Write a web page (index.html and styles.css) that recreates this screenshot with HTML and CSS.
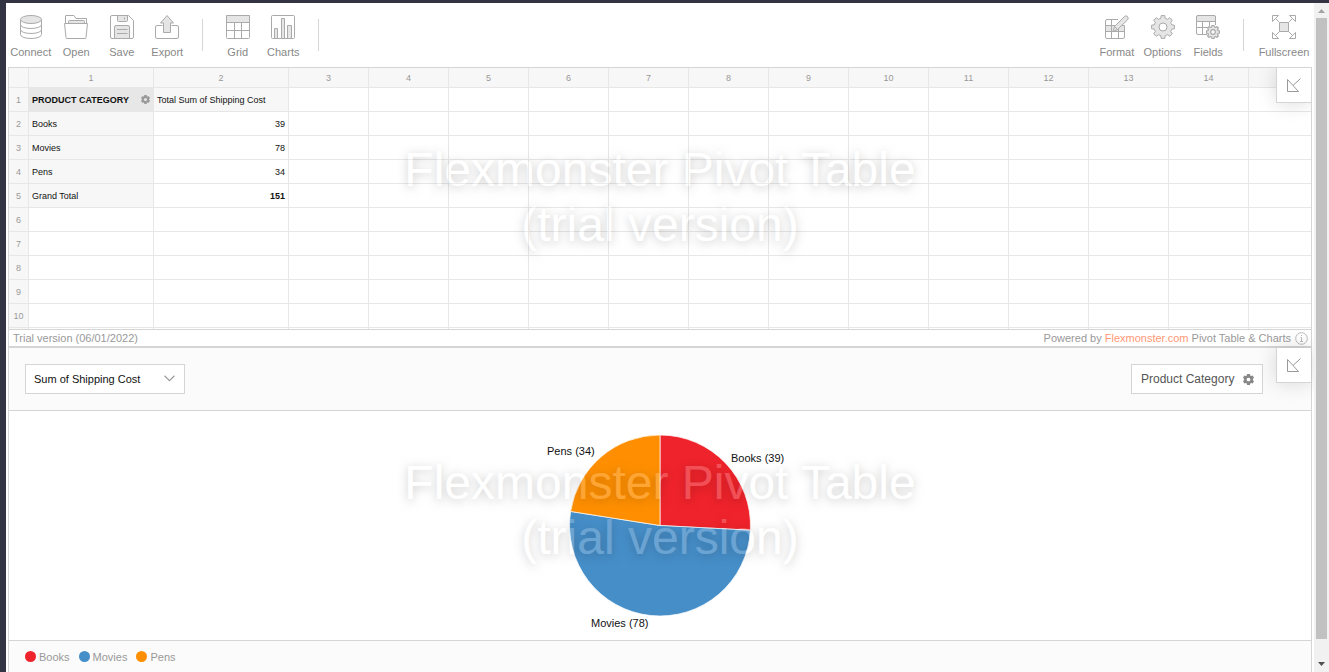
FILE: index.html
```html
<!DOCTYPE html>
<html lang="en">
<head>
<meta charset="utf-8">
<title>Pivot Table &amp; Charts</title>
<link rel="stylesheet" href="styles.css">
</head>
<body>
<svg class="defs" width="0" height="0" aria-hidden="true">
  <symbol id="gear" viewBox="-12 -12 24 24">
    <path stroke-linejoin="round" d="M-2.200-8.700L-1.800-11.400H1.800L2.200-8.700 4.600-7.700 6.800-9.300 9.300-6.800 7.700-4.600 8.700-2.200 11.400-1.800V1.800L8.700 2.200 7.700 4.600 9.300 6.800 6.800 9.300 4.600 7.700 2.200 8.700 1.800 11.400H-1.800L-2.200 8.700-4.600 7.700-6.800 9.300-9.300 6.800-7.700 4.600-8.700 2.200-11.400 1.800V-1.800L-8.700-2.200-7.700-4.600-9.300-6.800-6.800-9.300-4.600-7.700z"/>
    <circle class="hole" cx="0" cy="0" r="4"/>
  </symbol>
  <symbol id="cog" viewBox="0 0 10 10">
    <path fill-rule="evenodd" d="M3.700 0h2.600l.3 1.400.8.4L8.800 1.300l1.200 2.200L9 4.500v1l1 1-1.200 2.200-1.400-.5-.8.4-.3 1.400H3.700l-.3-1.400-.8-.4-1.400.5L0 6.500l1-1v-1l-1-1 1.200-2.200 1.400.5.8-.4zM5 3.300a1.700 1.700 0 1 0 0 3.400 1.700 1.700 0 0 0 0-3.400z"/>
  </symbol>
  <symbol id="collapse" viewBox="0 0 14 14">
    <path d="M.5 1.500v12h11zM6 7.500L13.500 .5"/>
  </symbol>
</svg>
<div class="page">
  <main class="content">
    <nav class="toolbar" aria-label="Toolbar">
      <div class="group group-four">
        <button class="tool" type="button"><svg class="icon" viewBox="0 0 24 24"><path d="M1.500 4.500v15c0 5.300 21 5.300 21 0v-15"/><path d="M1.500 9.500c0 5.300 21 5.300 21 0M1.500 14.500c0 5.300 21 5.300 21 0"/><ellipse class="shade" cx="12" cy="4.500" rx="10.500" ry="4"/></svg><span>Connect</span></button>
        <button class="tool" type="button"><svg class="icon" viewBox="0 0 24 24"><path d="M1.500 8V1q0-.5.500-.500h8l2 3h10.500V8"/><path class="shade" d="M4.500 8.500V6.500q0-1 1-1h14q1 0 1 1v2z"/><path class="solid" d="M.5 8.500h23l-1.500 14q0 1-1 1H3q-1 0-1-1z"/></svg><span>Open</span></button>
        <button class="tool" type="button"><svg class="icon" viewBox="0 0 24 24"><path d="M2 .5h16.500l5 5V22q0 1.500-1.500 1.500H2Q.5 23.500.5 22V2Q.5.5 2 .5z"/><path class="shade" d="M7.500 .5v5q0 1 1 1h8q1 0 1-1v-5zM4.500 23.500V12q0-1.500 1.500-1.500h12q1.500 0 1.500 1.500v11.500z"/><path d="M14.500 2.500v2M7 14.500h10.500M7 18.500h10.500"/></svg><span>Save</span></button>
        <button class="tool" type="button"><svg class="icon" viewBox="0 0 24 24"><path d="M7.500 10.500H2Q.5 10.500.5 12v10q0 1.500 1.500 1.500h20q1.500 0 1.500-1.500V12q0-1.500-1.500-1.500h-5.500"/><path class="shade" d="M12 .5l6.500 7.500h-3v9.500h-7V8h-3z"/></svg><span>Export</span></button>
      </div>
      <span class="divider"></span>
      <div class="group group-two">
        <button class="tool" type="button"><svg class="icon" viewBox="0 0 24 24"><rect x=".5" y=".5" width="23" height="23" rx="1"/><path class="shade" d="M.5 .5h23v7H.5z"/><path d="M.5 15.500h23M8.500 7.500v16M15.500 7.500v16"/></svg><span>Grid</span></button>
        <button class="tool" type="button"><svg class="icon" viewBox="0 0 24 24"><rect x=".5" y=".5" width="23" height="23" rx="1"/><path class="shade" d="M3.500 13.500h3v10h-3zM10.500 3.500h3v20h-3zM16.500 10.500h4v13h-4z"/></svg><span>Charts</span></button>
      </div>
      <span class="divider"></span>
      <div class="group group-three">
        <button class="tool" type="button"><svg class="icon" viewBox="0 0 24 24"><path class="shade" d="M.5 10.500h19v6H.5z"/><path d="M13 4.500H2Q.5 4.500.5 6v16q0 1.500 1.500 1.500h16q1.500 0 1.500-1.500V11M.5 10.500h11M.5 16.500h19M6.500 4.500v19M13.500 14v9.500"/><path class="shade" d="M8 16.500l1.500-5L19.500 1.500Q21 0 22.500 1.500T22.500 5L12.500 14.500z"/><path d="M9.500 11.500l3 3"/></svg><span>Format</span></button>
        <button class="tool" type="button"><svg class="icon gear"><use href="#gear"/></svg><span>Options</span></button>
        <button class="tool" type="button"><svg class="icon" viewBox="0 0 24 24"><path d="M11 19.500H2Q.5 19.500.5 18V2Q.5.5 2 .5h16q1.500 0 1.500 1.500v8M.5 12.500h11M6.500 6.500v13M13.500 6.500v5"/><path class="shade" d="M.5 6.500V2Q.5.5 2 .5h16q1.500 0 1.500 1.500v4.500z"/><svg class="gear small" x="10" y="10" width="14" height="14"><use href="#gear"/></svg></svg><span>Fields</span></button>
      </div>
      <span class="divider"></span>
      <button class="tool tool-wide" type="button"><svg class="icon" viewBox="0 0 24 24"><path class="shade" d="M7.500 7.500h9v9h-9z"/><path d="M.5 6.500v-6h6zM17.500 .5h6v6zM23.500 17.500v6h-6zM6.500 23.500h-6v-6zM3.500 3.500l4 4M20.500 3.500l-4 4M20.500 20.500l-4-4M3.500 20.500l4-4"/></svg><span>Fullscreen</span></button>
    </nav>

    <section class="pivot">
      <div class="grid-area">
        <table class="sheet">
          <colgroup><col class="c-num"><col class="c-first"><col class="c-second"><col span="13" class="c-rest"></colgroup>
          <thead>
            <tr><th><th>1<th>2<th>3<th>4<th>5<th>6<th>7<th>8<th>9<th>10<th>11<th>12<th>13<th>14<th></tr>
          </thead>
          <tbody>
            <tr><th>1<td class="field"><span class="field-box">PRODUCT CATEGORY <svg class="cog"><use href="#cog"/></svg></span><td class="head">Total Sum of Shipping Cost<td><td><td><td><td><td><td><td><td><td><td><td><td></tr>
            <tr><th>2<td class="head">Books<td class="num">39<td><td><td><td><td><td><td><td><td><td><td><td><td></tr>
            <tr><th>3<td class="head">Movies<td class="num">78<td><td><td><td><td><td><td><td><td><td><td><td><td></tr>
            <tr><th>4<td class="head">Pens<td class="num">34<td><td><td><td><td><td><td><td><td><td><td><td><td></tr>
            <tr><th>5<td class="head">Grand Total<td class="num total">151<td><td><td><td><td><td><td><td><td><td><td><td><td></tr>
            <tr><th>6<td><td><td><td><td><td><td><td><td><td><td><td><td><td><td></tr>
            <tr><th>7<td><td><td><td><td><td><td><td><td><td><td><td><td><td><td></tr>
            <tr><th>8<td><td><td><td><td><td><td><td><td><td><td><td><td><td><td></tr>
            <tr><th>9<td><td><td><td><td><td><td><td><td><td><td><td><td><td><td></tr>
            <tr><th>10<td><td><td><td><td><td><td><td><td><td><td><td><td><td><td></tr>
            <tr><th><td><td><td><td><td><td><td><td><td><td><td><td><td><td><td></tr>
          </tbody>
        </table>
        <button class="collapse" type="button" aria-label="Collapse grid"><svg><use href="#collapse"/></svg></button>
        <div class="watermark">Flexmonster Pivot Table<br>(trial version)</div>
      </div>
      <footer class="credits">
        <span>Trial version (06/01/2022)</span>
        <span class="powered"><span>Powered by <a href="#">Flexmonster.com</a> Pivot Table &amp; Charts</span>
          <svg class="info" viewBox="0 0 13 13"><circle cx="6.500" cy="6.500" r="5.800"/><path d="M5.500 5.500h1v4M5 9.500h3M6 3.500h1"/></svg></span>
      </footer>
    </section>

    <section class="chart">
      <header class="chart-head">
        <div class="measure">
          <select aria-label="Measure"><option>Sum of Shipping Cost</option></select>
          <svg class="chevron" viewBox="0 0 10 6"><path d="M.5 .5L5 5 9.500 .5"/></svg>
        </div>
        <button class="filter" type="button">Product Category <svg class="cog dark"><use href="#cog"/></svg></button>
      </header>
      <div class="plot">
        <svg class="pie" viewBox="0 0 300 229" role="img" aria-label="Sum of Shipping Cost by Product Category">
          <g transform="translate(150 114.500)">
            <path fill="#ef232b" d="M0 0V-90.500A90.500 90.500 0 0 1 90.380 4.700z"/>
            <path fill="#468ec8" d="M0 0L90.380 4.700A90.500 90.500 0 1 1 -89.400 -14.060z"/>
            <path fill="#ff8f00" d="M0 0L-89.400 -14.060A90.500 90.500 0 0 1 0 -90.500z"/>
          </g>
          <text x="37" y="44">Pens (34)</text>
          <text x="221" y="51">Books (39)</text>
          <text x="81" y="216">Movies (78)</text>
        </svg>
      </div>
      <ul class="legend">
        <li class="red">Books</li>
        <li class="blue">Movies</li>
        <li class="orange">Pens</li>
      </ul>
      <button class="collapse" type="button" aria-label="Collapse chart"><svg><use href="#collapse"/></svg></button>
      <div class="watermark">Flexmonster Pivot Table<br>(trial version)</div>
    </section>
  </main>
  <div class="scrollbar" aria-hidden="true">
    <svg viewBox="0 0 15 15"><path fill="#a3a3a3" d="M4 10l3.500-4L11 10z"/></svg>
    <div class="thumb"></div>
    <svg viewBox="0 0 15 15"><path fill="#505050" d="M4 5h7L7.500 9z"/></svg>
  </div>
</div>
</body>
</html>
```
FILE: styles.css
```css
* { box-sizing: border-box; }
body {
  margin: 0;
  background: #323343;
  font-family: "Liberation Sans", Arial, sans-serif;
  font-size: 11px;
  line-height: 13px;
  color: #111;
}
button { font: inherit; color: inherit; background: none; border: 0; padding: 0; }
.defs { position: absolute; }
.page { display: flex; height: 100vh; padding: 3px 0 0 6px; }
.content {
  flex: 1;
  min-width: 0;
  display: flex;
  flex-direction: column;
  padding: 0 2px;
  overflow: hidden;
  background: #fff;
}

/* Toolbar */
.toolbar { display: flex; height: 64px; flex: none; padding-top: 12px; }
.group { display: flex; }
.group-four { width: 182px; }
.group-two { width: 91px; }
.group-three { width: 137px; margin-left: auto; }
.tool {
  flex: 1 1 0;
  display: flex;
  flex-direction: column;
  align-items: center;
  gap: 7px;
  height: 46px;
  color: #888;
  white-space: nowrap;
}
.tool-wide { flex: none; width: 56px; }
.icon { width: 24px; height: 24px; fill: none; stroke: #aaa; stroke-width: 1; flex: none; }
.icon .shade, .gear { fill: #e5e5e5; }
.icon .solid { fill: #fff; }
.gear { stroke: #aaa; }
.hole { fill: #fff; }
.gear.small { stroke-width: 2; }
.divider { width: 1px; height: 32px; margin: 4px 12px 0; background: #d5d5d5; }

/* Grid */
.pivot { flex: none; border: 1px solid #d5d5d5; border-bottom-width: 2px; }
.grid-area { position: relative; height: 261px; overflow: hidden; }
.sheet {
  table-layout: fixed;
  width: 1320px;
  border-collapse: separate;
  border-spacing: 0;
  font-size: 9px;
  line-height: 12px;
}
.c-num { width: 20px; }
.c-first { width: 125px; }
.c-second { width: 135px; }
.c-rest { width: 80px; }
.sheet th, .sheet td {
  height: 24px;
  padding: 0 3px;
  border-right: 1px solid #e7e7e7;
  border-bottom: 1px solid #e7e7e7;
  text-align: left;
  white-space: nowrap;
}
.sheet th { padding: 0; background: #f7f7f7; color: #999; font-weight: normal; text-align: center; }
.sheet thead th { height: 20px; }
.sheet .head { background: #f7f7f7; }
.sheet .field { background: #e7e7e7; font-weight: bold; }
.field-box { display: flex; justify-content: space-between; align-items: center; }
.sheet .num { text-align: right; }
.sheet .total { font-weight: bold; }
.cog { width: 9px; height: 9px; fill: #999; }
.cog.dark { width: 11px; height: 11px; fill: #888; }

.collapse {
  position: absolute;
  top: 0;
  right: 0;
  width: 35px;
  height: 35px;
  background: #fff;
  border: solid #d5d5d5;
  border-width: 0 0 1px 1px;
  box-shadow: 0 0 20px rgba(0, 0, 0, .15);
}
.collapse svg { display: block; width: 14px; height: 14px; margin: 0 auto; fill: none; stroke: #999; }

.watermark {
  position: absolute;
  inset: 0;
  display: grid;
  place-content: center;
  text-align: center;
  font-size: 48px;
  line-height: 55px;
  color: #fff;
  text-shadow: 0 2px 10px #000;
  opacity: .2;
  pointer-events: none;
}
.grid-area .watermark { padding-bottom: 3px; }

.credits {
  display: flex;
  justify-content: space-between;
  height: 17px;
  padding: 2px 3px 0 4px;
  border-top: 1px solid #d5d5d5;
  color: #999;
}
.powered { display: flex; gap: 4px; }
.credits a { color: #ff9875; text-decoration: none; }
.info { width: 13px; height: 13px; fill: none; stroke: #bbb; }

/* Chart */
.chart {
  position: relative;
  flex: 1;
  display: flex;
  flex-direction: column;
  border: solid #d5d5d5;
  border-width: 0 1px;
}
.chart-head {
  display: flex;
  justify-content: space-between;
  padding: 16px 48px 16px 16px;
  background: #fbfbfb;
  border-bottom: 1px solid #d5d5d5;
}
.measure { position: relative; width: 160px; }
.measure select {
  appearance: none;
  width: 100%;
  height: 30px;
  padding: 0 8px;
  border: 1px solid #d5d5d5;
  border-radius: 0;
  background: #fff;
  color: #111;
  font: inherit;
}
.chevron { position: absolute; top: 11px; right: 10px; width: 11px; height: 7px; fill: none; stroke: #999; pointer-events: none; }
.filter {
  display: flex;
  align-items: center;
  justify-content: space-between;
  width: 132px;
  height: 30px;
  padding: 0 8px 0 9px;
  background: #fff;
  border: 1px solid #d5d5d5;
  color: #555;
  font-size: 12px;
}
.plot { flex: 1; display: flex; justify-content: center; align-items: center; }
.pie { width: 300px; height: 229px; }
.pie path { stroke: #fff; stroke-width: .7; }
.pie text { font-size: 11px; fill: #111; }
.legend {
  display: flex;
  gap: 9px;
  height: 32px;
  margin: 0;
  padding: 10px 16px 0;
  list-style: none;
  background: #fbfbfb;
  border-top: 1px solid #d5d5d5;
  color: #999;
}
.legend li { display: flex; gap: 3px; }
.legend li::before { content: ""; width: 11px; height: 11px; border-radius: 50%; }
.legend .red::before { background: #ef232b; }
.legend .blue::before { background: #468ec8; }
.legend .orange::before { background: #ff8f00; }

/* Scrollbar */
.scrollbar { display: flex; flex-direction: column; width: 15px; background: #f1f1f1; }
.scrollbar svg { width: 15px; height: 15px; flex: none; }
.thumb { flex: 1; margin: 0 2px 18px; background: #c1c1c1; }
```
